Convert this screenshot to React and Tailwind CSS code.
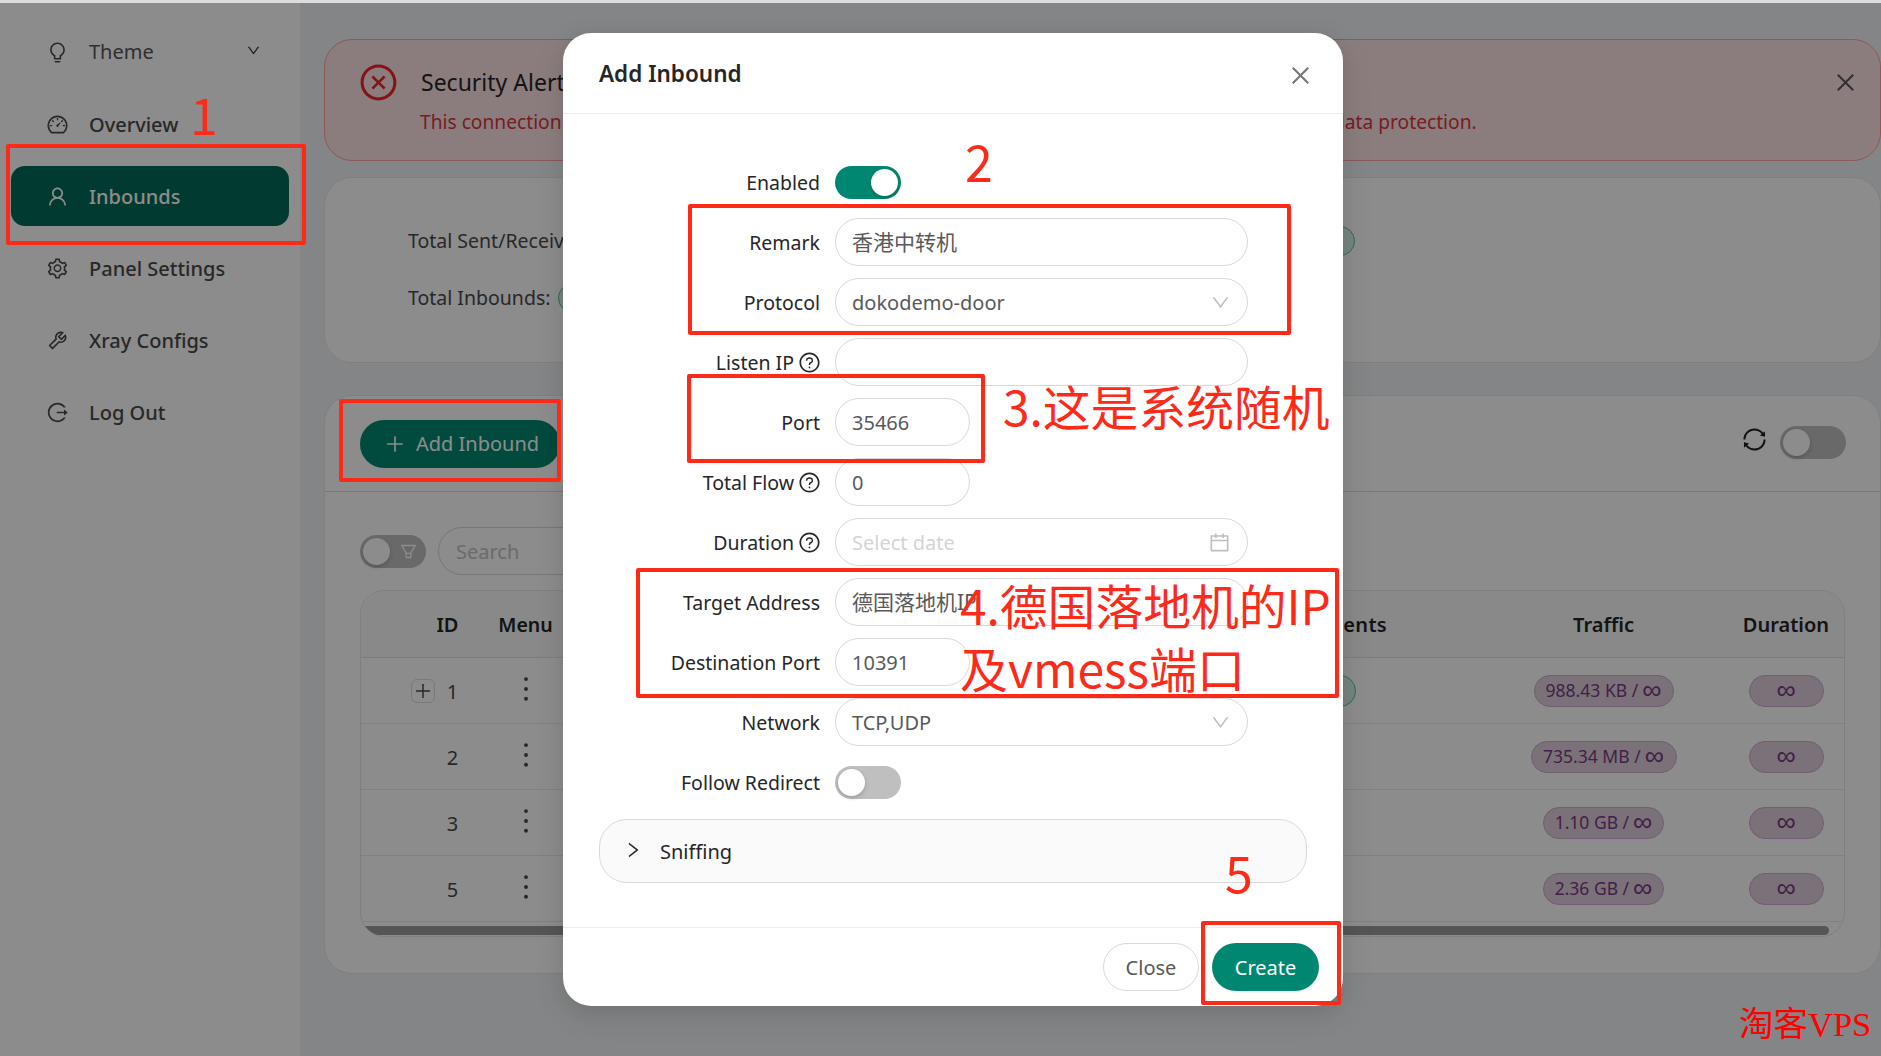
import React from 'react';
import {
  AiOutlineBulb,
  AiOutlineDashboard,
  AiOutlineUser,
  AiOutlineSetting,
  AiOutlineTool,
  AiOutlineLogout,
  AiOutlineCloseCircle,
  AiOutlineClose,
  AiOutlinePlus,
  AiOutlineQuestionCircle,
  AiOutlineCalendar,
  AiOutlineDown,
  AiOutlineRight,
  AiOutlineMore,
  AiOutlineFilter,
  AiOutlineSync,
} from 'react-icons/ai';

const menuItems = [
  { name: 'Overview', icon: AiOutlineDashboard },
  { name: 'Inbounds', icon: AiOutlineUser, active: true },
  { name: 'Panel Settings', icon: AiOutlineSetting },
  { name: 'Xray Configs', icon: AiOutlineTool },
  { name: 'Log Out', icon: AiOutlineLogout },
];

const rows = [
  { id: 1, traffic: '988.43 KB', width: 'w-[140px]', expand: true },
  { id: 2, traffic: '735.34 MB', width: 'w-[146px]' },
  { id: 3, traffic: '1.10 GB', width: 'w-[121px]' },
  { id: 5, traffic: '2.36 GB', width: 'w-[121px]' },
];

const Switch = ({ on, children }) => (
  <div className={`relative h-[33px] w-[66px] shrink-0 rounded-full ${on ? 'bg-[#008771]' : 'bg-[#bfbfbf]'}`}>
    <div className={`absolute top-[3px] h-[27px] w-[27px] rounded-full bg-white shadow-[0_2px_4px_rgba(0,35,11,0.2)] ${on ? 'right-[3px]' : 'left-[3px]'}`} />
    {children}
  </div>
);

const Infinity = () => <span className="font-['Liberation_Sans'] text-[27px] leading-none">∞</span>;

const FormRow = ({ label, help, children }) => (
  <div className="flex h-12 items-center gap-[15px]">
    <div className="flex w-[221px] items-center justify-end gap-[4px] text-[19.5px] text-[#262626]">
      <span className="pt-[2px]">{label}</span>
      {help && <AiOutlineQuestionCircle className="-mr-[1px] text-[23px]" />}
    </div>
    {children}
  </div>
);

const Field = ({ value, placeholder, short, icon, cjk }) => (
  <div className={`flex h-12 items-center justify-between rounded-[24px] border border-[#d9d9d9] pl-[16px] pr-[16px] ${cjk ? 'text-[21px]' : 'text-[20px]'} ${short ? 'w-[135px]' : 'w-[413px]'} ${placeholder ? 'text-[#d4d4d4]' : 'text-[#595959]'}`}>
    <span className="pt-[2px]">{value || placeholder}</span>
    {icon}
  </div>
);

const RedBox = ({ className }) => <div className={`absolute rounded-[2px] border-[4px] border-[#fd2a1a] ${className}`} />;

const Note = ({ className, children }) => (
  <div className={`absolute whitespace-nowrap font-['Noto_Sans_CJK_SC',sans-serif] leading-none text-[#fd2a1a] ${className}`}>{children}</div>
);

const Sidebar = () => (
  <aside className="flex w-[300px] shrink-0 flex-col gap-3 bg-white pl-[11px] pr-[11px] pt-[22px] text-[20px] text-[#4a4a4a]">
    <div className="flex h-[60px] items-center pl-[35px] pr-[28px]">
      <AiOutlineBulb className="mr-[20px] text-[23px]" />
      <span className="flex-1 text-[#555]">Theme</span>
      <AiOutlineDown className="mb-[4px] text-[15px] text-[#333]" />
    </div>
    {menuItems.map(item => {
      const Icon = item.icon;
      return (
        <div
          key={item.name}
          className={`flex h-[60px] items-center rounded-[14px] pl-[35px] font-medium ${item.active ? 'bg-[#006a58] text-white' : ''}`}
        >
          <Icon className="mr-[20px] text-[23px]" />
          <span className="pt-[2px]">{item.name}</span>
        </div>
      );
    })}
  </aside>
);

const InboundTable = () => (
  <div className="mt-[15px] h-[347px] overflow-hidden rounded-[24px] border border-[#e8e8e8]">
    <div className="grid h-[67px] grid-cols-[74px_35px_111px_898px_249px_116px] items-center border-b border-[#e4e4e4] bg-[#fafafa] pt-[2px] text-[20px] font-semibold text-[#262626]">
      <div />
      <div className="whitespace-nowrap pr-[10px] text-center">ID</div>
      <div className="text-center text-[19.5px]">Menu</div>
      <div className="pr-[92px] text-right tracking-[0.3px]">Clients</div>
      <div className="text-center">Traffic</div>
      <div className="text-center">Duration</div>
    </div>
    {rows.map(row => (
      <div key={row.id} className="grid h-[66px] grid-cols-[74px_35px_111px_898px_249px_116px] items-center border-b border-[#ececec] text-[20px] text-[#4a4a4a]">
        <div className="flex justify-end">
          {row.expand && (
            <div className="flex h-6 w-6 items-center justify-center rounded-[6px] border border-[#dcdcdc] text-[20px]">
              <AiOutlinePlus />
            </div>
          )}
        </div>
        <div className="pt-[2px] text-center">{row.id}</div>
        <div className="flex justify-center">
          <AiOutlineMore className="mb-[4px] text-[36px]" />
        </div>
        <div className="flex justify-end pr-[123px]">
          {row.expand && <div className="h-8 w-10 rounded-full border border-[#4fc79a] bg-[#d8f0e6]" />}
        </div>
        <div className="flex justify-center">
          <div className={`flex h-8 items-center justify-center gap-[4px] rounded-full border border-[#cfa9d6] bg-[#ded0da] text-[17.5px] text-[#7a3b86] ${row.width}`}>
            <span>{row.traffic} /</span>
            <Infinity />
          </div>
        </div>
        <div className="flex justify-center">
          <div className="flex h-8 w-[75px] items-center justify-center rounded-full border border-[#cfa9d6] bg-[#ded0da] text-[#7a3b86]">
            <Infinity />
          </div>
        </div>
      </div>
    ))}
    <div className="ml-[2px] mt-[4px] h-[9px] w-[1466px] rounded-r-full bg-[#9b9b9b]" />
  </div>
);

const Main = () => (
  <main className="flex-1 pl-[24px] pt-[39px]">
    <div className="relative h-[122px] rounded-[28px] border border-[#ffa0a0] bg-[#fde3e3] pl-[33px] pt-[22px]">
      <div className="flex items-center gap-[22px]">
        <AiOutlineCloseCircle className="text-[41px] text-[#f5222d]" />
        <span className="text-[23px] text-[#262626]">Security Alert</span>
      </div>
      <div className="mt-[5px] whitespace-nowrap pl-[62px] text-[19.2px] text-[#d9363e]">
        This connection is not secure. <span className="tracking-[-0.4px]">Please refrain from entering sensitive information until TLS is activated for</span> data protection.
      </div>
      <AiOutlineClose className="absolute right-[22px] top-[30px] text-[25px] text-[#595959]" />
    </div>

    <div className="mt-4 h-[186px] rounded-[28px] border border-[#e8e8e8] bg-white pl-[83px] pt-[48px] text-[19.5px] text-[#4a4a4a]">
      <div className="flex h-[30px] items-center gap-2">
        <span className="whitespace-nowrap">Total Sent/Received:</span>
        <div className="h-[30px] w-[755px] rounded-full border border-[#4fc79a] bg-[#d8f0e6]" />
      </div>
      <div className="mt-[27px] flex h-[30px] items-center gap-2">
        <span className="whitespace-nowrap">Total Inbounds:</span>
        <div className="h-[30px] w-[60px] rounded-full border border-[#4fc79a] bg-[#d8f0e6]" />
      </div>
    </div>

    <div className="mt-8 h-[579px] rounded-[28px] border border-[#e8e8e8] bg-white">
      <div className="flex h-[96px] items-center justify-between border-b border-[#dcdcdc] pl-[35px] pr-[34px]">
        <div className="flex h-12 w-[200px] items-center gap-[10px] rounded-full bg-[#008771] pl-[24px] text-[20px] text-white">
          <AiOutlinePlus className="text-[22px]" />
          <span>Add Inbound</span>
        </div>
        <div className="mb-[3px] flex items-center gap-[12px]">
          <AiOutlineSync className="mb-[6px] text-[27px] text-[#1f1f1f]" />
          <Switch />
        </div>
      </div>
      <div className="pl-[35px] pr-[35px] pt-[35px]">
        <div className="flex items-center gap-3">
          <Switch>
            <AiOutlineFilter className="absolute right-[8px] top-[7px] text-[19px] text-white" />
          </Switch>
          <div className="flex h-12 w-[400px] items-center rounded-full border border-[#d9d9d9] pl-[17px] pt-[2px] text-[20px] text-[#c4c4c4]">Search</div>
        </div>
        <InboundTable />
      </div>
    </div>
  </main>
);

const Modal = () => (
  <div className="absolute left-[563px] top-[33px] h-[973px] w-[780px] rounded-[28px] bg-white shadow-[0_6px_16px_rgba(0,0,0,0.08),0_9px_28px_8px_rgba(0,0,0,0.05)]">
    <div className="flex h-[81px] items-center justify-between border-b border-[#ececec] pl-[36px] pr-[30px]">
      <span className="pt-[2px] text-[22.5px] font-semibold text-[#262626]">Add Inbound</span>
      <AiOutlineClose className="mt-[4px] text-[25px] text-[#737373]" />
    </div>
    <div className="pl-[36px] pr-[36px] pt-[44px]">
      <div className="flex flex-col gap-3">
        <FormRow label="Enabled"><Switch on /></FormRow>
        <FormRow label="Remark"><Field value="香港中转机" cjk /></FormRow>
        <FormRow label="Protocol"><Field value="dokodemo-door" icon={<AiOutlineDown className="text-[21px] text-[#bfbfbf]" />} /></FormRow>
        <FormRow label="Listen IP" help><Field /></FormRow>
        <FormRow label="Port"><Field value="35466" short /></FormRow>
        <FormRow label="Total Flow" help><Field value="0" short /></FormRow>
        <FormRow label="Duration" help><Field placeholder="Select date" icon={<AiOutlineCalendar className="text-[23px] text-[#bfbfbf]" />} /></FormRow>
        <FormRow label="Target Address"><Field value="德国落地机IP" cjk /></FormRow>
        <FormRow label="Destination Port"><Field value="10391" short /></FormRow>
        <FormRow label="Network"><Field value="TCP,UDP" icon={<AiOutlineDown className="text-[21px] text-[#bfbfbf]" />} /></FormRow>
        <FormRow label="Follow Redirect"><Switch /></FormRow>
      </div>
      <div className="mt-[13px] flex h-16 items-center rounded-[28px] border border-[#d9d9d9] bg-[#fafafa] pl-[23px] text-[20px] text-[#262626]">
        <AiOutlineRight className="mb-[2px] mr-[17px] text-[20px]" />
        <span className="pt-[2px]">Sniffing</span>
      </div>
    </div>
    <div className="mt-[44px] flex justify-end gap-[13px] border-t border-[#ececec] pr-[24px] pt-[15px] text-[20px]">
      <div className="flex h-12 w-[96px] items-center justify-center rounded-full border border-[#d9d9d9] pt-[2px] text-[#595959]">Close</div>
      <div className="flex h-12 w-[107px] items-center justify-center rounded-full bg-[#008771] pt-[2px] text-white shadow-[0_2px_0_rgba(0,0,0,0.04)]">Create</div>
    </div>
  </div>
);

const Annotations = () => (
  <>
    <RedBox className="left-[6px] top-[144px] h-[101px] w-[300px]" />
    <RedBox className="left-[339px] top-[399px] h-[83px] w-[222px]" />
    <RedBox className="left-[688px] top-[204px] h-[131px] w-[603px]" />
    <RedBox className="left-[687px] top-[374px] h-[89px] w-[298px]" />
    <RedBox className="left-[636px] top-[568px] h-[130px] w-[703px]" />
    <RedBox className="left-[1201px] top-[921px] h-[84px] w-[140px]" />
    <Note className="left-[190px] top-[88px] text-[50px]">1</Note>
    <Note className="left-[965px] top-[135px] text-[50px]">2</Note>
    <Note className="left-[1003px] top-[382px] text-[47.8px]">3.这是系统随机</Note>
    <Note className="left-[960px] top-[581px] text-[47.8px]">4.德国落地机的IP</Note>
    <Note className="left-[960px] top-[643px] text-[48px]">及vmess端口</Note>
    <Note className="left-[1225px] top-[846px] text-[50px]">5</Note>
    <div className="absolute left-[1739px] top-[1007px] whitespace-nowrap font-['Liberation_Serif','Noto_Sans_CJK_SC',serif] text-[34.5px] leading-none text-[#ff0000]">淘客VPS</div>
  </>
);

const App = () => (
  <div className="relative flex h-[1056px] w-[1881px] overflow-hidden bg-[#f0f2f5] font-['Noto_Sans','Noto_Sans_CJK_SC',sans-serif]">
    <Sidebar />
    <Main />
    <div className="absolute inset-0 bg-black/45" />
    <div className="absolute left-0 right-0 top-0 h-[3px] bg-[#dcdcdc]" />
    <Modal />
    <Annotations />
  </div>
);

export default App;
